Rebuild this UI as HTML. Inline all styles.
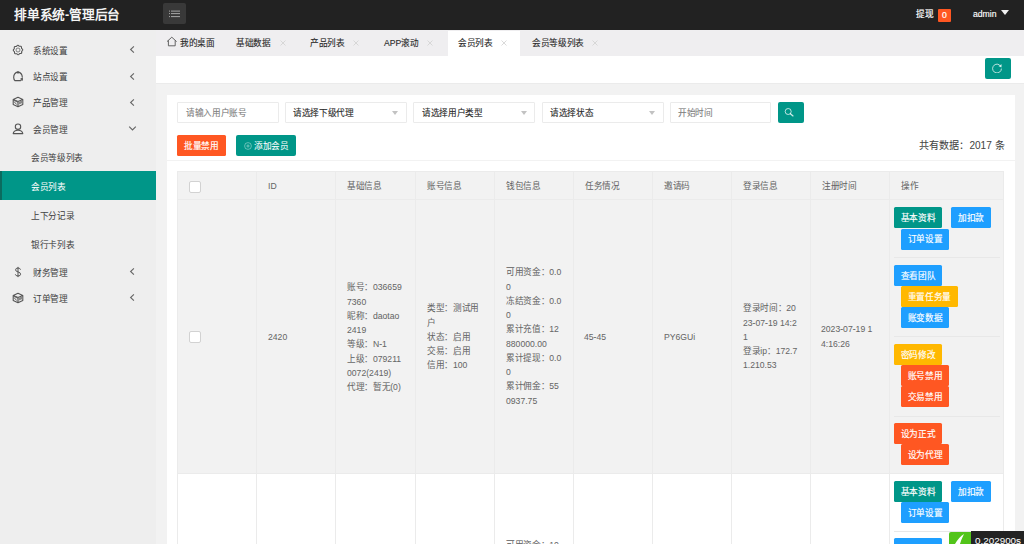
<!DOCTYPE html>
<html lang="zh-CN"><head><meta charset="utf-8"><style>
*{box-sizing:border-box;margin:0;padding:0}
html,body{width:1024px;height:544px;overflow:hidden;background:#f2f2f2;font-family:"Liberation Sans",sans-serif;font-size:12px;color:#444}
div,span,svg{position:absolute;white-space:nowrap}
.s{transform:scale(.72);transform-origin:0 0;font-size:12px;line-height:20px;-webkit-text-stroke:0.05px currentColor}
.ic{width:12px;height:12px;overflow:visible}
.inp{height:21px;border:1px solid #ebebeb;background:#fff;border-radius:1px}
.tri{width:0;height:0;border-left:3.5px solid transparent;border-right:3.5px solid transparent;border-top:4px solid #c2c2c2}
.bb{height:21px;border-radius:1.5px}
.bt{color:#fff;-webkit-text-stroke:0.2px #fff;text-align:center;height:29.17px;line-height:29.17px}
.g{background:#009688}.o{background:#ff5722}.b{background:#1e9fff}.y{background:#ffb800}
.vl{width:1px;background:#ebebeb}
.hl{height:1px;background:#ebebeb}
.t6{color:#666}
.dk{color:#2a2a2a;-webkit-text-stroke:0.15px #2a2a2a}
.cb{width:12px;height:12px;border:1px solid #d2d2d2;background:#fff;border-radius:2px}
</style></head><body>
<div style="left:0px;top:0px;width:1024px;height:30px;background:#222222;"></div>
<span class="s" style="left:13.6px;top:3.8px;font-size:17.6px;letter-spacing:-0.25px;line-height:30px;font-weight:bold;color:#f4f4f4;-webkit-text-stroke:0">排单系统-管理后台</span>
<div style="left:163.2px;top:2.8px;width:22.4px;height:21.5px;background:#393939;border-radius:2px"></div>
<svg style="left:163px;top:3px" width="22" height="21"><g fill="#a8a8a8"><rect x="6" y="7.6" width="1" height="1"/><rect x="6" y="10.1" width="1" height="1"/><rect x="6" y="13.1" width="1" height="1"/><rect x="8" y="7.6" width="9" height="1"/><rect x="8" y="10.1" width="9" height="1"/><rect x="8" y="13.1" width="9" height="1"/></g></svg>
<span class="s " style="left:916px;top:7.00px;color:#fff;-webkit-text-stroke:0.25px #fff">提现</span>
<div style="left:938px;top:8.5px;width:13px;height:13px;background:#ff5722;border-radius:1px"></div>
<span class="s" style="left:938px;top:8.5px;width:18.05px;height:18.05px;line-height:18.05px;text-align:center;color:#fff;-webkit-text-stroke:0.3px #fff">0</span>
<span class="s " style="left:973px;top:7.00px;color:#fff;-webkit-text-stroke:0.2px #fff">admin</span>
<div class="tri" style="left:1000.8px;top:10.2px;border-left-width:4.6px;border-right-width:4.6px;border-top:5px solid #f2f2f2"></div>
<div style="left:0px;top:30px;width:156px;height:514px;background:#eeeeee;"></div>
<div style="left:12px;top:43.5px;width:12px;height:12px"><svg class="ic" viewBox="0 0 12 12"><path d="M10.72 6.00 L10.58 6.30 L10.36 6.57 L10.12 6.82 L9.90 7.04 L9.74 7.27 L9.68 7.52 L9.68 7.82 L9.72 8.15 L9.74 8.50 L9.70 8.84 L9.57 9.13 L9.34 9.34 L9.03 9.45 L8.68 9.49 L8.33 9.49 L8.02 9.49 L7.75 9.55 L7.52 9.68 L7.32 9.89 L7.11 10.15 L6.88 10.42 L6.61 10.63 L6.31 10.74 L6.00 10.72 L5.70 10.58 L5.43 10.36 L5.18 10.12 L4.96 9.90 L4.73 9.74 L4.48 9.68 L4.18 9.68 L3.85 9.72 L3.50 9.74 L3.16 9.70 L2.87 9.57 L2.66 9.34 L2.55 9.03 L2.51 8.68 L2.51 8.33 L2.51 8.02 L2.45 7.75 L2.32 7.52 L2.11 7.32 L1.85 7.11 L1.58 6.88 L1.37 6.61 L1.26 6.31 L1.28 6.00 L1.42 5.70 L1.64 5.43 L1.88 5.18 L2.10 4.96 L2.26 4.73 L2.32 4.48 L2.32 4.18 L2.28 3.85 L2.26 3.50 L2.30 3.16 L2.43 2.87 L2.66 2.66 L2.97 2.55 L3.32 2.51 L3.67 2.51 L3.98 2.51 L4.25 2.45 L4.48 2.32 L4.68 2.11 L4.89 1.85 L5.12 1.58 L5.39 1.37 L5.69 1.26 L6.00 1.28 L6.30 1.42 L6.57 1.64 L6.82 1.88 L7.04 2.10 L7.27 2.26 L7.52 2.32 L7.82 2.32 L8.15 2.28 L8.50 2.26 L8.84 2.30 L9.13 2.43 L9.34 2.66 L9.45 2.97 L9.49 3.32 L9.49 3.67 L9.49 3.98 L9.55 4.25 L9.68 4.48 L9.89 4.68 L10.15 4.89 L10.42 5.12 L10.63 5.39 L10.74 5.69 L10.72 6.00Z" fill="none" stroke="#555" stroke-width="1.05"/><circle cx="6" cy="6" r="2" fill="none" stroke="#666" stroke-width="0.8"/></svg></div>
<span class="s " style="left:33px;top:43.60px;">系统设置</span>
<svg style="left:129px;top:45.3px" width="7" height="9" viewBox="0 0 7 9"><path d="M4.9 1.3 L1.6 4.5 L4.9 7.7" fill="none" stroke="#666" stroke-width="1.1"/></svg>
<div style="left:12px;top:69.7px;width:12px;height:12px"><svg class="ic" viewBox="0 0 12 12"><path d="M6 1.9 C3.2 2.6 1.6 4.6 1.7 7.6 C1.8 9 2.2 10 2.9 10.6 L8.6 10.6 M6 1.9 C8.6 2.6 10.2 4.4 10.3 7.2" fill="none" stroke="#555" stroke-width="1.15" stroke-linecap="round"/><circle cx="6" cy="2.6" r="1.1" fill="#555"/><rect x="8.6" y="8" width="2.4" height="2.6" fill="#666"/></svg></div>
<span class="s " style="left:33px;top:69.80px;">站点设置</span>
<svg style="left:129px;top:71.5px" width="7" height="9" viewBox="0 0 7 9"><path d="M4.9 1.3 L1.6 4.5 L4.9 7.7" fill="none" stroke="#666" stroke-width="1.1"/></svg>
<div style="left:12px;top:95.9px;width:12px;height:12px"><svg class="ic" viewBox="0 0 12 12"><path d="M6 1.2 L10.8 3.4 L10.8 8.6 L6 10.8 L1.2 8.6 L1.2 3.4 Z M1.2 3.4 L6 5.6 L10.8 3.4 M6 5.6 L6 10.8" fill="none" stroke="#555" stroke-width="1.1" stroke-linejoin="round"/><path d="M1.6 3.6 L6 5.6 L6 6.8 L1.6 4.8Z" fill="#666"/><path d="M6.4 6 L10.4 4.2 L10.4 7 L6.4 8.8Z" fill="#888"/><path d="M2 5.6 L4.8 8.6" stroke="#555" stroke-width="0.9"/></svg></div>
<span class="s " style="left:33px;top:96.00px;">产品管理</span>
<svg style="left:129px;top:97.7px" width="7" height="9" viewBox="0 0 7 9"><path d="M4.9 1.3 L1.6 4.5 L4.9 7.7" fill="none" stroke="#666" stroke-width="1.1"/></svg>
<div style="left:12px;top:122.50000000000001px;width:12px;height:12px"><svg class="ic" viewBox="0 0 12 12"><circle cx="6" cy="3.7" r="2.7" fill="none" stroke="#555" stroke-width="1.1"/><path d="M1.2 10.6 Q1.6 7.2 6 7.2 Q10.4 7.2 10.8 10.6 Z" fill="none" stroke="#555" stroke-width="1.1" stroke-linejoin="round"/></svg></div>
<span class="s " style="left:33px;top:122.60px;">会员管理</span>
<svg style="left:128px;top:124.60000000000001px" width="9" height="7" viewBox="0 0 9 7"><path d="M1.2 1.6 L4.5 4.9 L7.8 1.6" fill="none" stroke="#666" stroke-width="1.15"/></svg>
<div style="left:12px;top:265.5px;width:12px;height:12px"><svg class="ic" viewBox="0 0 12 12"><path d="M8.5 3.7 Q8.2 2 6 2 Q3.6 2 3.6 3.9 Q3.6 5.4 6 5.9 Q8.6 6.4 8.6 8.2 Q8.6 10 6 10 Q3.6 10 3.3 8.3 M6 0.9 L6 11.1" fill="none" stroke="#555" stroke-width="1"/></svg></div>
<span class="s " style="left:33px;top:265.60px;">财务管理</span>
<svg style="left:129px;top:267.3px" width="7" height="9" viewBox="0 0 7 9"><path d="M4.9 1.3 L1.6 4.5 L4.9 7.7" fill="none" stroke="#666" stroke-width="1.1"/></svg>
<div style="left:12px;top:291.5px;width:12px;height:12px"><svg class="ic" viewBox="0 0 12 12"><path d="M6 1.2 L10.8 3.4 L10.8 8.6 L6 10.8 L1.2 8.6 L1.2 3.4 Z M1.2 3.4 L6 5.6 L10.8 3.4 M6 5.6 L6 10.8" fill="none" stroke="#555" stroke-width="1.1" stroke-linejoin="round"/><path d="M1.6 3.6 L6 5.6 L6 6.8 L1.6 4.8Z" fill="#666"/><path d="M6.4 6 L10.4 4.2 L10.4 7 L6.4 8.8Z" fill="#888"/><path d="M2 5.6 L4.8 8.6" stroke="#555" stroke-width="0.9"/></svg></div>
<span class="s " style="left:33px;top:291.60px;">订单管理</span>
<svg style="left:129px;top:293.3px" width="7" height="9" viewBox="0 0 7 9"><path d="M4.9 1.3 L1.6 4.5 L4.9 7.7" fill="none" stroke="#666" stroke-width="1.1"/></svg>
<div style="left:0px;top:171px;width:156px;height:29px;background:#009688;"></div>
<div style="left:0px;top:171px;width:2px;height:29px;background:#0b6b5f;"></div>
<span class="s " style="left:31px;top:150.60px;">会员等级列表</span>
<span class="s " style="left:31px;top:179.60px;color:#fff">会员列表</span>
<span class="s " style="left:31px;top:208.60px;">上下分记录</span>
<span class="s " style="left:31px;top:237.60px;">银行卡列表</span>
<div style="left:156px;top:30px;width:868px;height:26px;background:#efeef0;"></div>
<div style="left:448px;top:31px;width:72px;height:25px;background:#fff;"></div>
<svg style="left:166px;top:36px" width="12" height="11" viewBox="0 0 12 11"><path d="M1 5.6 L5.8 1.2 L10.6 5.6 M2.4 4.4 L2.4 9.8 L9.2 9.8 L9.2 4.4" fill="none" stroke="#555" stroke-width="0.9"/></svg>
<span class="s dk" style="left:180px;top:36.40px;">我的桌面</span>
<span class="s dk" style="left:236px;top:36.40px;">基础数据</span>
<svg style="left:280px;top:39.6px" width="6" height="6" viewBox="0 0 6 6"><path d="M0.5 0.5 L5.5 5.5 M5.5 0.5 L0.5 5.5" stroke="#d0d0d0" stroke-width="0.8"/></svg>
<span class="s dk" style="left:310px;top:36.40px;">产品列表</span>
<svg style="left:353px;top:39.6px" width="6" height="6" viewBox="0 0 6 6"><path d="M0.5 0.5 L5.5 5.5 M5.5 0.5 L0.5 5.5" stroke="#d0d0d0" stroke-width="0.8"/></svg>
<span class="s dk" style="left:384px;top:36.40px;">APP滚动</span>
<svg style="left:427px;top:39.6px" width="6" height="6" viewBox="0 0 6 6"><path d="M0.5 0.5 L5.5 5.5 M5.5 0.5 L0.5 5.5" stroke="#d0d0d0" stroke-width="0.8"/></svg>
<span class="s dk" style="left:458px;top:36.40px;">会员列表</span>
<svg style="left:501px;top:39.6px" width="6" height="6" viewBox="0 0 6 6"><path d="M0.5 0.5 L5.5 5.5 M5.5 0.5 L0.5 5.5" stroke="#d0d0d0" stroke-width="0.8"/></svg>
<span class="s dk" style="left:532px;top:36.40px;">会员等级列表</span>
<svg style="left:592px;top:39.6px" width="6" height="6" viewBox="0 0 6 6"><path d="M0.5 0.5 L5.5 5.5 M5.5 0.5 L0.5 5.5" stroke="#d0d0d0" stroke-width="0.8"/></svg>
<div style="left:156px;top:56px;width:868px;height:27px;background:#fff;"></div>
<div style="left:156px;top:83px;width:868px;height:1px;background:#ebebeb;"></div>
<div style="left:985px;top:58px;width:26px;height:21px;background:#009688;border-radius:2px"></div>
<svg style="left:991.8px;top:63.4px" width="10" height="10" viewBox="0 0 10 10"><path d="M7.6 2.0 A4.4 4.4 0 1 0 9.4 5.6" fill="none" stroke="rgba(255,255,255,.8)" stroke-width="0.9"/><path d="M6.4 2.9 L9.6 1.2 L9.4 4.6 Z" fill="rgba(255,255,255,.85)"/></svg>
<div style="left:167px;top:95px;width:848px;height:449px;background:#fff;"></div>
<div class="inp" style="left:177px;top:102px;width:102px"></div>
<span class="s " style="left:186px;top:106.30px;color:#808080;-webkit-text-stroke:0.12px #808080">请输入用户账号</span>
<div class="inp" style="left:285px;top:102px;width:122px"></div>
<span class="s dk" style="left:293px;top:106.30px;">请选择下级代理</span>
<div class="tri" style="left:392px;top:111px"></div>
<div class="inp" style="left:413px;top:102px;width:122px"></div>
<span class="s dk" style="left:421.5px;top:106.30px;">请选择用户类型</span>
<div class="tri" style="left:520.5px;top:111px"></div>
<div class="inp" style="left:542px;top:102px;width:122px"></div>
<span class="s dk" style="left:550px;top:106.30px;">请选择状态</span>
<div class="tri" style="left:649px;top:111px"></div>
<div class="inp" style="left:670px;top:102px;width:101px"></div>
<span class="s " style="left:678px;top:106.30px;color:#808080;-webkit-text-stroke:0.12px #808080">开始时间</span>
<div style="left:778px;top:102px;width:26px;height:21px;background:#009688;border-radius:2px"></div>
<svg style="left:784px;top:107px" width="10" height="10" viewBox="0 0 10 10"><circle cx="4.2" cy="4.5" r="3" fill="none" stroke="rgba(255,255,255,.8)" stroke-width="0.9"/><path d="M6.4 6.7 L9 8.9" stroke="rgba(255,255,255,.8)" stroke-width="1.3" stroke-linecap="round"/></svg>
<div class="bb o" style="left:177px;top:135px;width:49px;height:21px"></div>
<div class="s bt" style="left:177px;top:135.80px;width:68.06px;height:29.17px;line-height:29.17px">批量禁用</div>
<div style="left:236px;top:135px;width:60px;height:21px;background:#009688;border-radius:2px"></div>
<svg style="left:243.5px;top:142px" width="8" height="8" viewBox="0 0 8 8"><circle cx="4" cy="4" r="3.4" fill="none" stroke="rgba(255,255,255,.65)" stroke-width="0.6"/><path d="M2.3 4 L5.7 4 M4 2.3 L4 5.7" stroke="rgba(255,255,255,.65)" stroke-width="0.6"/></svg>
<span class="s " style="left:254px;top:139.30px;color:#fff">添加会员</span>
<span class="s" style="left:918.8px;top:137.8px;font-size:14px;line-height:20px">共有数据：2017 条</span>
<div style="left:167px;top:160px;width:848px;height:1px;background:#f2f2f2;"></div>
<div style="left:177px;top:171px;width:827px;height:28px;background:#f2f2f2;"></div>
<div style="left:177px;top:199px;width:827px;height:274.2px;background:#f2f2f2;"></div>
<div style="left:177px;top:473.2px;width:827px;height:70.80000000000001px;background:#fff;"></div>
<div class="vl" style="left:176.5px;top:171px;height:373px"></div>
<div class="vl" style="left:256.0px;top:171px;height:373px"></div>
<div class="vl" style="left:335.0px;top:171px;height:373px"></div>
<div class="vl" style="left:414.5px;top:171px;height:373px"></div>
<div class="vl" style="left:494.0px;top:171px;height:373px"></div>
<div class="vl" style="left:573.0px;top:171px;height:373px"></div>
<div class="vl" style="left:652.0px;top:171px;height:373px"></div>
<div class="vl" style="left:730.5px;top:171px;height:373px"></div>
<div class="vl" style="left:810.0px;top:171px;height:373px"></div>
<div class="vl" style="left:889.2px;top:171px;height:373px"></div>
<div class="vl" style="left:1003.0px;top:171px;height:373px"></div>
<div class="hl" style="left:177px;top:170.5px;width:827px"></div>
<div class="hl" style="left:177px;top:198.5px;width:827px"></div>
<div class="hl" style="left:177px;top:472.7px;width:827px"></div>
<div class="cb" style="left:189px;top:180.5px"></div>
<span class="s t6" style="left:268.0px;top:178.80px;">ID</span>
<span class="s t6" style="left:347.0px;top:178.80px;">基础信息</span>
<span class="s t6" style="left:426.5px;top:178.80px;">账号信息</span>
<span class="s t6" style="left:506.0px;top:178.80px;">钱包信息</span>
<span class="s t6" style="left:585.0px;top:178.80px;">任务情况</span>
<span class="s t6" style="left:664.0px;top:178.80px;">邀请码</span>
<span class="s t6" style="left:742.5px;top:178.80px;">登录信息</span>
<span class="s t6" style="left:822.0px;top:178.80px;">注册时间</span>
<span class="s t6" style="left:901.2px;top:178.80px;">操作</span>
<div class="cb" style="left:189px;top:330.5px"></div>
<span class="s t6" style="left:268px;top:330.30px;">2420</span>
<div class="s t6" style="left:347px;top:280.50px;line-height:19.792px">账号：036659<br>7360<br>昵称：daotao<br>2419<br>等级：N-1<br>上级：079211<br>0072(2419)<br>代理：暂无(0)</div>
<div class="s t6" style="left:426.5px;top:301.88px;line-height:19.792px">类型：测试用<br>户<br>状态：启用<br>交易：启用<br>信用：100</div>
<div class="s t6" style="left:505.5px;top:266.25px;line-height:19.792px">可用资金：0.0<br>0<br>冻结资金：0.0<br>0<br>累计充值：12<br>880000.00<br>累计提现：0.0<br>0<br>累计佣金：55<br>0937.75</div>
<span class="s t6" style="left:584px;top:330.30px;">45-45</span>
<span class="s t6" style="left:663.5px;top:330.30px;">PY6GUi</span>
<div class="s t6" style="left:742.5px;top:301.88px;line-height:19.792px">登录时间：20<br>23-07-19 14:2<br>1<br>登录ip：172.7<br>1.210.53</div>
<div class="s t6" style="left:821px;top:323.25px;line-height:19.792px">2023-07-19 1<br>4:16:26</div>
<div class="bb g" style="left:893.7px;top:207.4px;width:48.2px;height:21px"></div>
<div class="s bt" style="left:893.7px;top:208.20px;width:66.94px;height:29.17px;line-height:29.17px">基本资料</div>
<div class="bb b" style="left:951.3px;top:207.4px;width:40px;height:21px"></div>
<div class="s bt" style="left:951.3px;top:208.20px;width:55.56px;height:29.17px;line-height:29.17px">加扣款</div>
<div class="bb b" style="left:901px;top:228.5px;width:48px;height:21px"></div>
<div class="s bt" style="left:901px;top:229.30px;width:66.67px;height:29.17px;line-height:29.17px">订单设置</div>
<div style="left:893.7px;top:257.3px;width:106px;height:1px;background:#e8e8e8;"></div>
<div class="bb b" style="left:893.7px;top:265.0px;width:48.2px;height:21px"></div>
<div class="s bt" style="left:893.7px;top:265.80px;width:66.94px;height:29.17px;line-height:29.17px">查看团队</div>
<div class="bb y" style="left:901px;top:286.1px;width:56.7px;height:21px"></div>
<div class="s bt" style="left:901px;top:286.90px;width:78.75px;height:29.17px;line-height:29.17px">重置任务量</div>
<div class="bb b" style="left:901px;top:307.2px;width:48px;height:21px"></div>
<div class="s bt" style="left:901px;top:308.00px;width:66.67px;height:29.17px;line-height:29.17px">账变数据</div>
<div style="left:893.7px;top:336.0px;width:106px;height:1px;background:#e8e8e8;"></div>
<div class="bb y" style="left:893.7px;top:343.79999999999995px;width:48px;height:21px"></div>
<div class="s bt" style="left:893.7px;top:344.60px;width:66.67px;height:29.17px;line-height:29.17px">密码修改</div>
<div class="bb o" style="left:901px;top:364.9px;width:48px;height:21px"></div>
<div class="s bt" style="left:901px;top:365.70px;width:66.67px;height:29.17px;line-height:29.17px">账号禁用</div>
<div class="bb o" style="left:901px;top:386.0px;width:48px;height:21px"></div>
<div class="s bt" style="left:901px;top:386.80px;width:66.67px;height:29.17px;line-height:29.17px">交易禁用</div>
<div style="left:893.7px;top:415.6px;width:106px;height:1px;background:#e8e8e8;"></div>
<div class="bb o" style="left:893.7px;top:423.29999999999995px;width:48px;height:21px"></div>
<div class="s bt" style="left:893.7px;top:424.10px;width:66.67px;height:29.17px;line-height:29.17px">设为正式</div>
<div class="bb o" style="left:901px;top:444.4px;width:48px;height:21px"></div>
<div class="s bt" style="left:901px;top:445.20px;width:66.67px;height:29.17px;line-height:29.17px">设为代理</div>
<div class="bb g" style="left:893.7px;top:480.8px;width:48.2px;height:21px"></div>
<div class="s bt" style="left:893.7px;top:481.60px;width:66.94px;height:29.17px;line-height:29.17px">基本资料</div>
<div class="bb b" style="left:951.3px;top:480.8px;width:40px;height:21px"></div>
<div class="s bt" style="left:951.3px;top:481.60px;width:55.56px;height:29.17px;line-height:29.17px">加扣款</div>
<div class="bb b" style="left:901px;top:501.9px;width:48px;height:21px"></div>
<div class="s bt" style="left:901px;top:502.70px;width:66.67px;height:29.17px;line-height:29.17px">订单设置</div>
<div style="left:893.7px;top:530.7px;width:106px;height:1px;background:#e8e8e8;"></div>
<div class="bb b" style="left:893.7px;top:538.4px;width:48.2px;height:21px"></div>
<div class="s bt" style="left:893.7px;top:539.20px;width:66.94px;height:29.17px;line-height:29.17px">查看团队</div>
<div class="bb y" style="left:901px;top:559.5px;width:56.7px;height:21px"></div>
<div class="s bt" style="left:901px;top:560.30px;width:78.75px;height:29.17px;line-height:29.17px">重置任务量</div>
<div class="bb b" style="left:901px;top:580.6px;width:48px;height:21px"></div>
<div class="s bt" style="left:901px;top:581.40px;width:66.67px;height:29.17px;line-height:29.17px">账变数据</div>
<div style="left:893.7px;top:609.4px;width:106px;height:1px;background:#e8e8e8;"></div>
<div class="bb y" style="left:893.7px;top:617.2px;width:48px;height:21px"></div>
<div class="s bt" style="left:893.7px;top:618.00px;width:66.67px;height:29.17px;line-height:29.17px">密码修改</div>
<div class="bb o" style="left:901px;top:638.3px;width:48px;height:21px"></div>
<div class="s bt" style="left:901px;top:639.10px;width:66.67px;height:29.17px;line-height:29.17px">账号禁用</div>
<div class="bb o" style="left:901px;top:659.4px;width:48px;height:21px"></div>
<div class="s bt" style="left:901px;top:660.20px;width:66.67px;height:29.17px;line-height:29.17px">交易禁用</div>
<div style="left:893.7px;top:689.0px;width:106px;height:1px;background:#e8e8e8;"></div>
<div class="bb o" style="left:893.7px;top:696.7px;width:48px;height:21px"></div>
<div class="s bt" style="left:893.7px;top:697.50px;width:66.67px;height:29.17px;line-height:29.17px">设为正式</div>
<div class="bb o" style="left:901px;top:717.8px;width:48px;height:21px"></div>
<div class="s bt" style="left:901px;top:718.60px;width:66.67px;height:29.17px;line-height:29.17px">设为代理</div>
<div class="s t6" style="left:505.5px;top:539.08px;line-height:19.792px">可用资金：10</div>
<div style="left:949px;top:532px;width:22px;height:12px;background:#52c41a;border-top-left-radius:2px"></div>
<svg style="left:949px;top:532px" width="21" height="12" viewBox="0 0 21 12"><path d="M6 12 Q10 5 15 2 Q12 8 11 12 Z" fill="#fff"/></svg>
<div style="left:971px;top:531px;width:53px;height:13px;background:#232323;"></div>
<span class="s" style="left:975px;top:534px;font-size:13.7px;line-height:20px;color:#fff">0.202900s</span>
</body></html>
